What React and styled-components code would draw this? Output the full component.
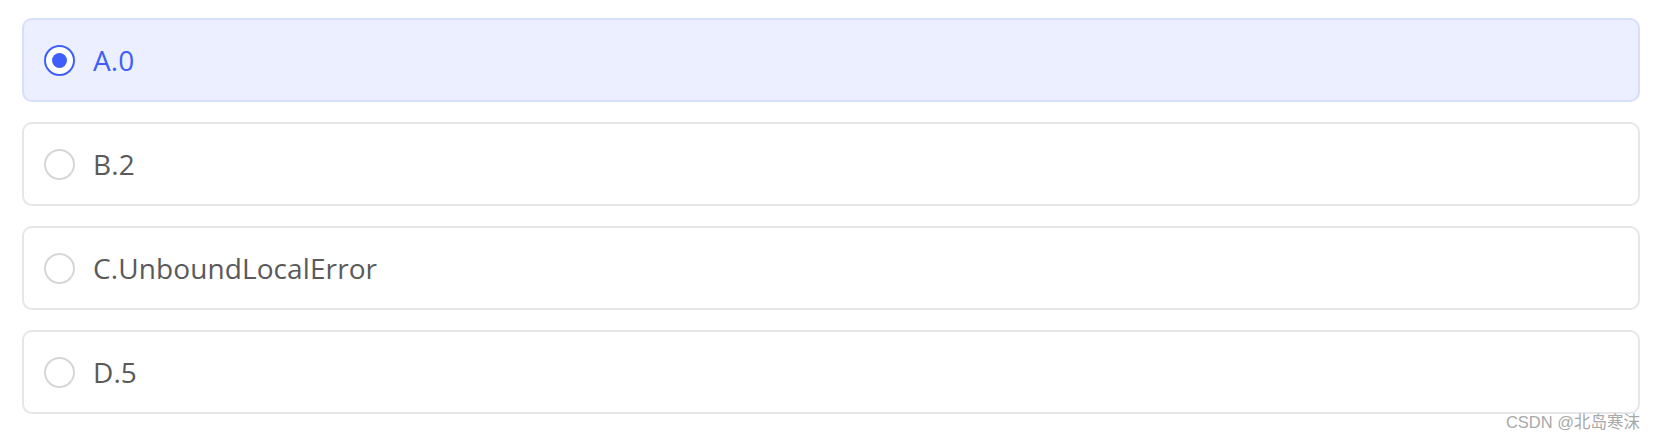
import React, {useState} from 'react';
import styled, {createGlobalStyle} from "styled-components";

const Global = createGlobalStyle`
  body {
    margin: 0;
    background: #fff;
    font-family: "Open Sans", "Noto Sans", "Noto Sans CJK SC", sans-serif;
  }
`

const Page = styled.div`
  padding: 18px 15px 0 22px;
  display: flex;
  flex-direction: column;
  gap: 20px;
  position: relative;
  height: 439px;
  box-sizing: border-box;
`

const Option = styled.label`
  display: flex;
  align-items: center;
  gap: 18px;
  height: 84px;
  box-sizing: border-box;
  padding: 0 20px;
  border: 2px solid ${p => p.$active ? '#d6defd' : '#e6e6e8'};
  border-radius: 10px;
  background: ${p => p.$active ? '#ebefff' : '#fff'};
  cursor: pointer;
`

const Radio = styled.span`
  width: 31px;
  height: 31px;
  box-sizing: border-box;
  border-radius: 50%;
  border: 2px solid ${p => p.$active ? '#3f5ff8' : '#d6d6d6'};
  background: #fff;
  display: flex;
  align-items: center;
  justify-content: center;

  &::after {
    content: '';
    display: ${p => p.$active ? 'block' : 'none'};
    width: 15px;
    height: 15px;
    border-radius: 50%;
    background: #3f5ff8;
  }
`

const Text = styled.span`
  font-size: 28px;
  color: ${p => p.$active ? '#3f5ff8' : '#5a5a5a'};
  letter-spacing: 0.1px;
`

const Mark = styled.div`
  position: absolute;
  right: 15px;
  bottom: 6px;
  font-family: "Liberation Sans", "Noto Sans CJK SC", sans-serif;
  font-size: 16.5px;
  color: #a8a8a8;
`

const options = ['A.0', 'B.2', 'C.UnboundLocalError', 'D.5']

const App = () => {
  const [picked, setPicked] = useState(0)

  return <Page>
    <Global/>
    {options.map((o, i) =>
      <Option key={o} $active={picked === i} onClick={() => setPicked(i)}>
        <Radio $active={picked === i}/>
        <Text $active={picked === i}>{o}</Text>
      </Option>
    )}
    <Mark>CSDN @北岛寒沫</Mark>
  </Page>
}

export default App;
